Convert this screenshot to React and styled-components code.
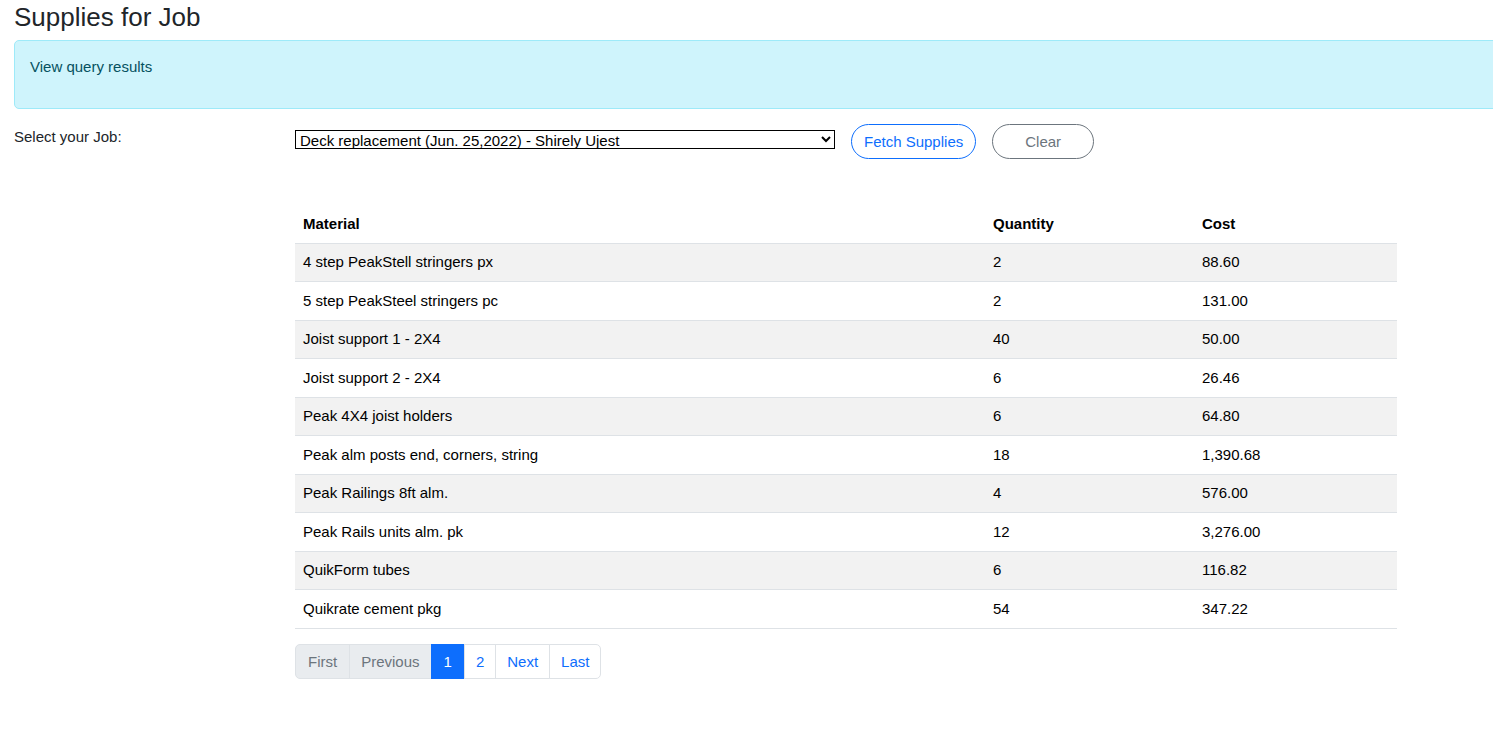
import React from 'react'
import styled, { createGlobalStyle } from 'styled-components'

const GlobalStyle = createGlobalStyle`
    body {
        margin: 0;
        font-family: "Liberation Sans", Arial, sans-serif;
        color: #212529;
        background: #fff;
        overflow: hidden;
    }
`

const Page = styled.div`
    padding: 0 0 0 14px;
    font-size: 15px;
`

const Title = styled.h1`
    font-size: 26px;
    font-weight: 400;
    margin: 0;
    padding-top: 2px;
    line-height: 30px;
    height: 38px;
`

const Alert = styled.div`
    margin-right: -20px;
    height: 69px;
    box-sizing: border-box;
    padding: 17px 15px;
    background-color: #cff4fc;
    border: 1px solid #9eeaf9;
    border-radius: 5px;
    color: #055160;
    font-size: 15px;
`

const FormRow = styled.div`
    display: flex;
    align-items: flex-start;
    margin-top: 15px;
`

const Label = styled.label`
    width: 281px;
    padding-top: 4px;
    font-size: 15px;
`

const Select = styled.select`
    width: 540px;
    height: 19px;
    margin-top: 6px;
    font-family: "Liberation Sans", Arial, sans-serif;
    font-size: 15px;
    color: #000;
    border: 1px solid #000;
    border-radius: 0;
    padding: 0;
    background: #fff;
`

const PillButton = styled.button`
    height: 35px;
    margin-left: ${p => p.$gap}px;
    padding: 0 ${p => p.$pad}px;
    border-radius: 18px;
    background: #fff;
    font-family: "Liberation Sans", Arial, sans-serif;
    font-size: 15px;
    border: 1px solid ${p => p.$color};
    color: ${p => p.$color};
`

const TableWrap = styled.div`
    margin: 46px 0 0 281px;
    width: 1102px;
`

const Table = styled.table`
    width: 100%;
    border-collapse: collapse;
    font-size: 15px;
    color: #000;
`

const HeadCell = styled.th`
    text-align: left;
    font-weight: 700;
    padding: 8px 8px;
    height: 38px;
    box-sizing: border-box;
    border-bottom: 1px solid #dee2e6;
    width: ${p => p.$w};
`

const Row = styled.tr`
    background-color: ${p => (p.$striped ? '#f2f2f2' : '#fff')};
`

const Cell = styled.td`
    padding: 7px 8px 8px;
    height: 38.5px;
    box-sizing: border-box;
    border-bottom: 1px solid #dee2e6;
`

const Pager = styled.ul`
    display: flex;
    list-style: none;
    padding: 0;
    margin: 15px 0 0;
`

const PageItem = styled.li`
    height: 35px;
    box-sizing: border-box;
    display: flex;
    align-items: center;
    padding: 0 ${p => (p.$narrow ? 11 : 12)}px;
    font-size: 15px;
    border: 1px solid #dee2e6;
    margin-left: -1px;
    background: ${p => (p.$active ? '#0d6efd' : p.$disabled ? '#e9ecef' : '#fff')};
    border-color: ${p => (p.$active ? '#0d6efd' : '#dee2e6')};
    color: ${p => (p.$active ? '#fff' : p.$disabled ? '#6c757d' : '#0d6efd')};
    &:first-child {
        margin-left: 0;
        border-radius: 5px 0 0 5px;
    }
    &:last-child {
        border-radius: 0 5px 5px 0;
    }
`

function App() {
    const supplies = [
        { id: 1, material: '4 step PeakStell stringers px', quantity: 2, cost: '88.60' },
        { id: 2, material: '5 step PeakSteel stringers pc', quantity: 2, cost: '131.00' },
        { id: 3, material: 'Joist support 1 - 2X4', quantity: 40, cost: '50.00' },
        { id: 4, material: 'Joist support 2 - 2X4', quantity: 6, cost: '26.46' },
        { id: 5, material: 'Peak 4X4 joist holders', quantity: 6, cost: '64.80' },
        { id: 6, material: 'Peak alm posts end, corners, string', quantity: 18, cost: '1,390.68' },
        { id: 7, material: 'Peak Railings 8ft alm.', quantity: 4, cost: '576.00' },
        { id: 8, material: 'Peak Rails units alm. pk', quantity: 12, cost: '3,276.00' },
        { id: 9, material: 'QuikForm tubes', quantity: 6, cost: '116.82' },
        { id: 10, material: 'Quikrate cement pkg', quantity: 54, cost: '347.22' }
    ]

    return (
        <Page>
            <GlobalStyle />
            <Title>Supplies for Job</Title>
            <Alert>View query results</Alert>
            <FormRow>
                <Label>Select your Job:</Label>
                <Select defaultValue="deck">
                    <option value="deck">Deck replacement (Jun. 25,2022) - Shirely Ujest</option>
                </Select>
                <PillButton $gap={16} $pad={12} $color="#0d6efd">Fetch Supplies</PillButton>
                <PillButton $gap={16} $pad={32} $color="#6c757d">Clear</PillButton>
            </FormRow>
            <TableWrap>
                <Table>
                    <thead>
                        <tr>
                            <HeadCell $w="690px">Material</HeadCell>
                            <HeadCell $w="209px">Quantity</HeadCell>
                            <HeadCell>Cost</HeadCell>
                        </tr>
                    </thead>
                    <tbody>
                        {supplies.map((s, i) => (
                            <Row key={s.id} $striped={i % 2 === 0}>
                                <Cell>{s.material}</Cell>
                                <Cell>{s.quantity}</Cell>
                                <Cell>{s.cost}</Cell>
                            </Row>
                        ))}
                    </tbody>
                </Table>
                <Pager>
                    <PageItem $disabled>First</PageItem>
                    <PageItem $disabled $narrow>Previous</PageItem>
                    <PageItem $active>1</PageItem>
                    <PageItem $narrow>2</PageItem>
                    <PageItem $narrow>Next</PageItem>
                    <PageItem $narrow>Last</PageItem>
                </Pager>
            </TableWrap>
        </Page>
    )
}

export default App
